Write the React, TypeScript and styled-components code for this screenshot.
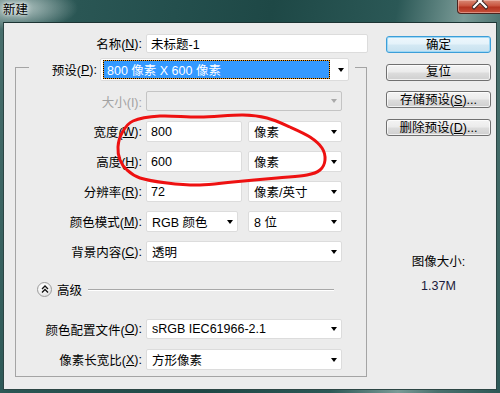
import React from 'react';
import styled, { createGlobalStyle, css } from 'styled-components';

const GlobalStyle = createGlobalStyle`
  html, body { margin: 0; padding: 0; background: #2b5553; }
  body {
    width: 500px; height: 393px; overflow: hidden;
    font-family: "Liberation Sans", "Noto Sans CJK SC", sans-serif;
  }
  * { box-sizing: border-box; }
`;

const Window = styled.div`
  position: relative;
  width: 500px;
  height: 393px;
  display: flex;
  flex-direction: column;
  padding: 0 3px 3px 3px;
  overflow: hidden;
  background:
    radial-gradient(ellipse 60px 22px at 18px 8px, rgba(200, 215, 213, 0.85), rgba(200, 215, 213, 0) 100%),
    linear-gradient(100deg, #4a706e 0%, #2a5654 14%, #1e4846 48%, #2b5856 70%, #7a9b97 82%, #4a716e 89%, #2d5856 100%);
`;

const TitleBar = styled.div`
  height: 22px;
  flex: none;
  display: flex;
  align-items: flex-start;
  justify-content: space-between;
`;

const Title = styled.span`
  margin-top: 3px;
  font-size: 12.5px;
  line-height: 14px;
  color: #000;
  text-shadow: 0 0 6px rgba(255, 255, 255, 0.9), 0 0 3px rgba(255, 255, 255, 0.9);
`;

const CloseButton = styled.div`
  width: 46px;
  height: 14px;
  margin-right: -6px;
  border: 1px solid #4a2520;
  border-top: none;
  border-radius: 0 0 4px 4px;
  background: linear-gradient(#d98a76 0%, #c9553f 45%, #b43420 55%, #c6503a 100%);
  box-shadow: inset 0 0 0 1px rgba(255, 220, 210, 0.45);
  overflow: hidden;
  display: flex;
  justify-content: center;
`;

const Body = styled.div`
  flex: 1;
  display: flex;
  background: #ececec;
  border: 1px solid #2c4544;
  border-top-color: #1c3433;
`;

const LeftPane = styled.div`
  width: 363px;
  padding: 11px 0 0 11px;
  display: flex;
  flex-direction: column;
`;

const Row = styled.div<{ $label: number; $h?: number }>`
  display: grid;
  grid-template-columns: ${(p) => p.$label}px auto;
  column-gap: 4px;
  height: ${(p) => p.$h ?? 20}px;
`;

const Label = styled.span<{ $disabled?: boolean }>`
  display: flex;
  align-items: center;
  justify-content: flex-end;
  white-space: nowrap;
  font-size: 12.5px;
  color: ${(p) => (p.$disabled ? '#a2a2a2' : '#000')};
`;

const Key = styled.span`
  text-decoration: underline;
  text-underline-offset: 1px;
`;

const fieldBase = css`
  height: 100%;
  border: 1px solid #dcdcdc;
  border-radius: 2px;
  background: #fff;
  font-family: "Liberation Sans", "Noto Sans CJK SC", sans-serif;
  font-size: 12.5px;
  color: #000;
`;

const TextBox = styled.input<{ $w: number }>`
  ${fieldBase};
  width: ${(p) => p.$w}px;
  padding: 0 0 0 4px;
  outline: none;
`;

const Select = styled.div<{ $w: number; $disabled?: boolean; $pad?: number }>`
  ${fieldBase};
  width: ${(p) => p.$w}px;
  display: flex;
  align-items: center;
  padding-left: ${(p) => p.$pad ?? 5}px;
  white-space: nowrap;
  ${(p) =>
    p.$disabled &&
    css`
      background: #ececec;
      border-color: #c4c4c4;
    `}
`;

const Arrow = styled.span<{ $disabled?: boolean }>`
  flex: none;
  margin-left: auto;
  margin-right: 4px;
  width: 0;
  height: 0;
  border-left: 3.5px solid transparent;
  border-right: 3.5px solid transparent;
  border-top: 4px solid ${(p) => (p.$disabled ? '#a9a9a9' : '#000')};
`;

const Highlight = styled.span`
  width: 227px;
  height: 19px;
  display: flex;
  align-items: center;
  padding-left: 3px;
  color: #fff;
  border: 1px dotted #000;
  background: linear-gradient(#3399ff, #3399ff) padding-box, #f29a1a border-box;
`;

const Pair = styled.div<{ $gap: number }>`
  display: flex;
  gap: ${(p) => p.$gap}px;
  height: 100%;
`;

const Group = styled.fieldset`
  width: 352px;
  margin: 0;
  padding: 0 0 7px 0;
  min-width: 0;
  border: 1px solid #a4a4a4;
`;

const Legend = styled.legend`
  display: flex;
  align-items: center;
  margin-left: 13px;
  padding: 5px 6px 0 0;
  background: #ececec;
`;

const LegendLabel = styled(Label)`
  width: 68px;
  margin-right: 3px;
  height: 23px;
`;

const Rows = styled.div`
  display: flex;
  flex-direction: column;
  gap: 10px;
  padding-top: 10px;
`;

const Advanced = styled.div`
  height: 16px;
  margin: 10px 32px 12px 21px;
  display: flex;
  align-items: center;
  font-size: 12.5px;
`;

const Toggle = styled.span`
  width: 15px;
  height: 15px;
  border-radius: 50%;
  border: 1px solid #9c9c9c;
  background: radial-gradient(circle at 40% 30%, #ffffff 0%, #f3f3f3 50%, #d2d2d2 100%);
  display: flex;
  align-items: center;
  justify-content: center;
  margin-right: 5px;
`;

const Rule = styled.span`
  flex: 1;
  height: 1px;
  margin-left: 6px;
  background: #a8a8a8;
  box-shadow: 0 1px 0 #fff;
`;

const RightPane = styled.div`
  width: 105px;
  margin-left: 19px;
  padding-top: 13px;
  display: flex;
  flex-direction: column;
  align-items: center;
`;

const Buttons = styled.div`
  display: flex;
  flex-direction: column;
  gap: 10.7px;
`;

const Button = styled.button<{ $default?: boolean }>`
  width: 105px;
  height: 17px;
  padding: 0;
  border: 1px solid #707070;
  border-radius: 3px;
  background: linear-gradient(#f4f4f4 0%, #ebebeb 48%, #dddddd 52%, #cfcfcf 100%);
  box-shadow: inset 0 0 0 1px rgba(255, 255, 255, 0.7);
  font-family: "Liberation Sans", "Noto Sans CJK SC", sans-serif;
  font-size: 12.5px;
  line-height: 14px;
  color: #000;
  ${(p) =>
    p.$default &&
    css`
      border-color: #3c9ed8;
      box-shadow: inset 0 0 0 1px #9fd8f5;
      background: linear-gradient(#eef7fc 0%, #e4f2fa 48%, #d4e9f4 52%, #c8e1ef 100%);
    `}
`;

const Info = styled.div`
  margin-top: 118px;
  display: flex;
  flex-direction: column;
  align-items: center;
  font-size: 12.5px;
  line-height: 16px;
  color: #000;
`;

const InfoValue = styled.span`
  margin-top: 8px;
  color: #1a1a3a;
`;

const Annotation = styled.svg`
  position: absolute;
  left: 0;
  top: 0;
  pointer-events: none;
`;

const pts: [number, number][] = [
  [133, 121], [160, 116], [200, 117], [243, 115], [267, 118], [290, 127], [310, 137],
  [322, 148], [325, 160], [320, 170], [307, 175], [277, 178], [233, 182], [200, 185],
  [167, 183], [140, 178], [127, 170], [120, 160], [118, 147], [122, 133],
];

function smoothPath(p: [number, number][]): string {
  const n = p.length;
  let d = `M${p[0][0]} ${p[0][1]}`;
  for (let i = 0; i < n; i++) {
    const p0 = p[(i - 1 + n) % n];
    const p1 = p[i];
    const p2 = p[(i + 1) % n];
    const p3 = p[(i + 2) % n];
    const c1x = p1[0] + (p2[0] - p0[0]) / 6;
    const c1y = p1[1] + (p2[1] - p0[1]) / 6;
    const c2x = p2[0] - (p3[0] - p1[0]) / 6;
    const c2y = p2[1] - (p3[1] - p1[1]) / 6;
    d += ` C${c1x.toFixed(1)} ${c1y.toFixed(1)} ${c2x.toFixed(1)} ${c2y.toFixed(1)} ${p2[0]} ${p2[1]}`;
  }
  return d + ' Z';
}

export default function App() {
  return (
    <>
      <GlobalStyle />
      <Window>
        <TitleBar>
          <Title>新建</Title>
          <CloseButton>
            <svg width="16" height="14" viewBox="0 0 16 14">
              <path d="M2 -5 L14 7 M14 -5 L2 7" stroke="#3b2624" strokeWidth="4.2" strokeLinecap="square" />
              <path d="M2 -5 L14 7 M14 -5 L2 7" stroke="#ffffff" strokeWidth="2.2" strokeLinecap="square" />
            </svg>
          </CloseButton>
        </TitleBar>
        <Body>
          <LeftPane>
            <Row $label={127} $h={19}>
              <Label>名称(<Key>N</Key>):</Label>
              <TextBox $w={222} readOnly value="未标题-1" />
            </Row>
            <Group>
              <Legend>
                <LegendLabel>预设(<Key>P</Key>):</LegendLabel>
                <Select $w={249} $pad={2} style={{ height: 23 }}>
                  <Highlight>800 像素 X 600 像素</Highlight>
                  <Arrow />
                </Select>
              </Legend>
              <Rows>
                <Row $label={126}>
                  <Label $disabled>大小(I):</Label>
                  <Select $w={196} $disabled>
                    <Arrow $disabled />
                  </Select>
                </Row>
                <Row $label={126}>
                  <Label>宽度(<Key>W</Key>):</Label>
                  <Pair $gap={6}>
                    <TextBox $w={96} readOnly value="800" />
                    <Select $w={94}>像素<Arrow /></Select>
                  </Pair>
                </Row>
                <Row $label={126}>
                  <Label>高度(<Key>H</Key>):</Label>
                  <Pair $gap={6}>
                    <TextBox $w={96} readOnly value="600" />
                    <Select $w={94}>像素<Arrow /></Select>
                  </Pair>
                </Row>
                <Row $label={126}>
                  <Label>分辨率(<Key>R</Key>):</Label>
                  <Pair $gap={6}>
                    <TextBox $w={96} readOnly value="72" />
                    <Select $w={94}>像素/英寸<Arrow /></Select>
                  </Pair>
                </Row>
                <Row $label={126}>
                  <Label>颜色模式(<Key>M</Key>):</Label>
                  <Pair $gap={10}>
                    <Select $w={92}>RGB 颜色<Arrow /></Select>
                    <Select $w={94}>8 位<Arrow /></Select>
                  </Pair>
                </Row>
                <Row $label={126}>
                  <Label>背景内容(<Key>C</Key>):</Label>
                  <Select $w={196}>透明<Arrow /></Select>
                </Row>
                <Advanced>
                  <Toggle>
                    <svg width="8" height="8" viewBox="0 0 8 8">
                      <path d="M1 4 L4 1 L7 4 M1 7.5 L4 4.5 L7 7.5" fill="none" stroke="#111" strokeWidth="1.3" />
                    </svg>
                  </Toggle>
                  高级
                  <Rule />
                </Advanced>
                <Row $label={126}>
                  <Label>颜色配置文件(<Key>O</Key>):</Label>
                  <Select $w={196}>sRGB IEC61966-2.1<Arrow /></Select>
                </Row>
                <Row $label={126}>
                  <Label>像素长宽比(<Key>X</Key>):</Label>
                  <Select $w={196}>方形像素<Arrow /></Select>
                </Row>
              </Rows>
            </Group>
          </LeftPane>
          <RightPane>
            <Buttons>
              <Button $default>确定</Button>
              <Button>复位</Button>
              <Button>存储预设(<Key>S</Key>)...</Button>
              <Button>删除预设(<Key>D</Key>)...</Button>
            </Buttons>
            <Info>
              <span>图像大小:</span>
              <InfoValue>1.37M</InfoValue>
            </Info>
          </RightPane>
        </Body>
        <Annotation width="500" height="393" viewBox="0 0 500 393">
          <path d={smoothPath(pts)} fill="none" stroke="#ee1111" strokeWidth="3" strokeLinejoin="round" />
        </Annotation>
      </Window>
    </>
  );
}
